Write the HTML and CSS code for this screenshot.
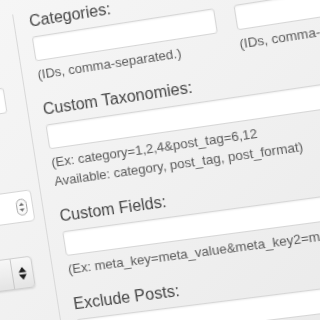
FILE: index.html
```html
<!DOCTYPE html>
<html>
<head>
<meta charset="utf-8">
<link rel="stylesheet" href="styles.css">
</head>
<body>
<div class="stage">
  <div class="plane">
    <aside class="side">
      <div class="input side-a"></div>
      <div class="select side-b">
        <svg class="spin" width="11" height="17" viewBox="0 0 11 17"><rect x="0.5" y="0.5" width="10" height="16" rx="5" fill="#fafafa" stroke="#a8a8a8"/><path d="M3 7h5L5.5 4z" fill="#6a6a6a"/><path d="M3 10h5l-2.5 3z" fill="#6a6a6a"/></svg>
      </div>
      <div class="select side-c">
        <span class="sep"></span>
        <span class="arrows"><svg width="8" height="13" viewBox="0 0 8 13"><path d="M0 5.5h8L4 0z" fill="#1e1e1e"/><path d="M0 7.5h8L4 13z" fill="#1e1e1e"/></svg></span>
      </div>
    </aside>
    <main class="main">
      <div class="cols">
        <div class="field">
          <label class="label">Categories:</label>
          <div class="input"></div>
          <p class="hint">(IDs, comma-separated.)</p>
        </div>
        <div class="field">
          <label class="label">&nbsp;</label>
          <div class="input"></div>
          <p class="hint">(IDs, comma-separated.)</p>
        </div>
      </div>
      <div class="field wide">
        <label class="label">Custom Taxonomies:</label>
        <div class="input"></div>
        <p class="hint">(Ex: category=1,2,4&amp;post_tag=6,12<br>Available: category, post_tag, post_format)</p>
      </div>
      <div class="field wide">
        <label class="label">Custom Fields:</label>
        <div class="input"></div>
        <p class="hint">(Ex: meta_key=meta_value&amp;meta_key2=meta_value2)</p>
      </div>
      <div class="field wide">
        <label class="label">Exclude Posts:</label>
        <div class="input"></div>
      </div>
    </main>
  </div>
</div>
</body>
</html>
```

FILE: styles.css
```css
html, body {
  margin: 0;
  padding: 0;
}
body {
  width: 320px;
  height: 320px;
  overflow: hidden;
  background: #f1f1f1;
  font-family: "Liberation Sans", Arial, sans-serif;
}
.stage {
  width: 320px;
  height: 320px;
  overflow: hidden;
  background: linear-gradient(135deg, #f6f6f6 0%, #f1f1f1 50%, #ebebeb 100%);
}
.plane {
  display: flex;
  width: 700px;
  min-height: 560px;
  padding-top: 40px;
  box-sizing: border-box;
  transform-origin: 0 0;
  transform: translate(31.7px, 36.7px) rotate(-8.9deg) perspective(1000px) rotateY(-6deg) translate(-216px, -65px);
  filter: blur(0.35px);
}
.side {
  width: 200px;
  flex: none;
  border-right: 1px solid #d8d8d8;
  display: flex;
  flex-direction: column;
  align-items: flex-end;
  padding-top: 71px;
}
.main {
  flex: 1;
  padding-left: 15px;
}
.input {
  box-sizing: border-box;
  height: 25px;
  background: #fff;
  border: 1px solid #d6d6d6;
  border-radius: 3px;
  box-shadow: inset 0 1px 2px rgba(0, 0, 0, 0.06);
}
.select {
  box-sizing: border-box;
  height: 32px;
  border-radius: 4px;
  display: flex;
  align-items: center;
  justify-content: flex-end;
}
.side-a {
  width: 160px;
  height: 26px;
  margin-right: 20px;
}
.side-b {
  width: 170px;
  margin-top: 79px;
  margin-right: 9px;
  background: #fff;
  border: 1px solid #d6d6d6;
  padding-right: 5px;
}
.side-c {
  width: 160px;
  margin-top: 34px;
  margin-right: 19px;
  background: linear-gradient(#f7f7f7, #e4e4e4);
  border: 1px solid #cfcfcf;
  box-shadow: 0 1px 2px rgba(0, 0, 0, 0.12);
}
.sep {
  width: 1px;
  align-self: stretch;
  background: #c8c8c8;
}
.arrows {
  width: 20px;
  display: flex;
  justify-content: center;
  align-items: center;
}
.cols {
  display: grid;
  grid-template-columns: 182px 185px;
  column-gap: 19px;
  margin-bottom: 16px;
}
.cols .field {
  margin-bottom: 0;
}
.field {
  margin-bottom: 16px;
}
.label {
  display: block;
  font-size: 16px;
  line-height: 20px;
  margin-bottom: 5px;
  color: #444;
}
.wide .input {
  width: 400px;
}
.hint {
  margin: 4px 0 0;
  font-size: 13px;
  line-height: 19px;
  color: #5a5a5a;
  white-space: nowrap;
}
```
